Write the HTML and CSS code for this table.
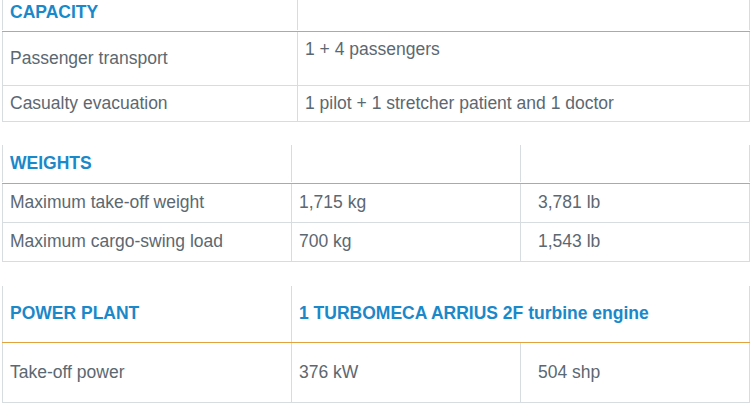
FILE: index.html
```html
<!DOCTYPE html>
<html lang="en">
<head>
<meta charset="utf-8">
<title>Specifications</title>
<link rel="stylesheet" href="styles.css">
</head>
<body>
<main class="specs">
  <section class="spec spec-two spec-first">
    <div class="row head head-first">
      <div class="cell title">CAPACITY</div>
      <div class="cell"></div>
    </div>
    <div class="row tall">
      <div class="cell">Passenger transport</div>
      <div class="cell top">1 + 4 passengers</div>
    </div>
    <div class="row">
      <div class="cell">Casualty evacuation</div>
      <div class="cell">1 pilot + 1 stretcher patient and 1 doctor</div>
    </div>
  </section>

  <section class="spec spec-three">
    <div class="row head">
      <div class="cell title">WEIGHTS</div>
      <div class="cell"></div>
      <div class="cell"></div>
    </div>
    <div class="row mid">
      <div class="cell">Maximum take-off weight</div>
      <div class="cell">1,715 kg</div>
      <div class="cell alt">3,781 lb</div>
    </div>
    <div class="row mid">
      <div class="cell">Maximum cargo-swing load</div>
      <div class="cell">700 kg</div>
      <div class="cell alt">1,543 lb</div>
    </div>
  </section>

  <section class="spec spec-three spec-last">
    <div class="row head head-big">
      <div class="cell title">POWER PLANT</div>
      <div class="cell title span2">1 TURBOMECA ARRIUS 2F turbine engine</div>
    </div>
    <div class="row big">
      <div class="cell">Take-off power</div>
      <div class="cell">376 kW</div>
      <div class="cell alt">504 shp</div>
    </div>
  </section>
</main>
</body>
</html>
```

FILE: styles.css
```css
* {
  box-sizing: border-box;
}

html, body {
  margin: 0;
  padding: 0;
  background: #ffffff;
}

body {
  font-family: "Liberation Sans", Arial, sans-serif;
  font-size: 17.5px;
  line-height: 20px;
  color: #5c6871;
}

.specs {
  padding-left: 2px;
  width: 750px;
}

.spec {
  width: 748px;
  margin-bottom: 23px;
}

.spec-three {
  margin-bottom: 24px;
}

.spec-last {
  margin-bottom: 0;
}

.row {
  display: grid;
  border-bottom: 1px solid #d6dcdf;
  align-items: stretch;
}

.spec-two .row {
  grid-template-columns: 295px 1fr;
}

.spec-three .row {
  grid-template-columns: 289px 229px 1fr;
}

.cell {
  border-left: 1px solid #d6dcdf;
  padding: 0 7px 2px;
  display: flex;
  align-items: center;
}

.cell:last-child {
  border-right: 1px solid #d6dcdf;
}

.cell.span2 {
  grid-column: span 2;
}

.cell.alt {
  padding-left: 17px;
}

.cell.top {
  align-items: flex-start;
  padding-top: 7px;
}

.head {
  border-bottom: 1px solid #e2a23e;
  height: 39px;
  padding-bottom: 1px;
}

.head-first {
  height: 32px;
}

.head-first .cell {
  align-items: flex-start;
  padding-top: 2px;
}

.head-big {
  height: 57px;
  padding-bottom: 0;
}

.title {
  font-weight: bold;
  color: #1a88c9;
}

.row.tall {
  height: 54px;
}

.spec-two .row:not(.head):not(.tall) {
  height: 36px;
}

.row.mid {
  height: 39px;
}

.row.big {
  height: 60px;
}
```
